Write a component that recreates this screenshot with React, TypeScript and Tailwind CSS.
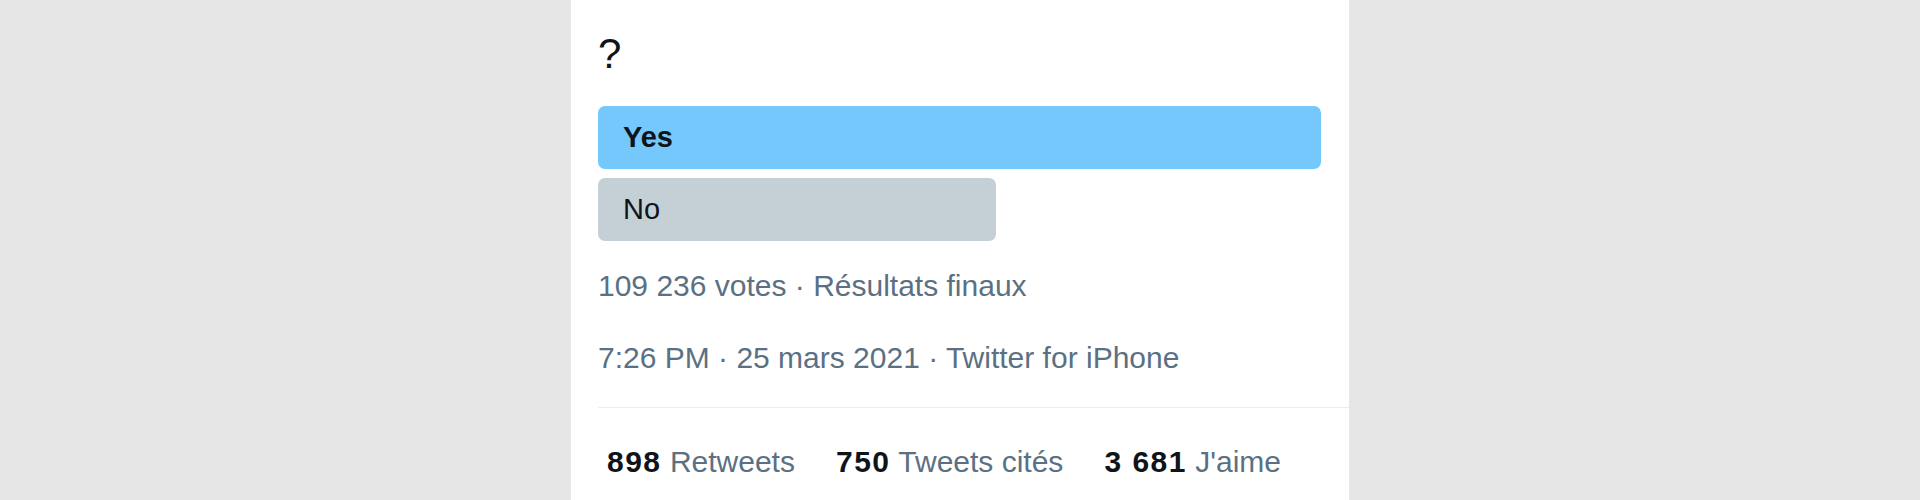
import React from "react";

export default function App() {
  return (
    <div
      className="w-full h-[500px] bg-[#e6e6e6] flex justify-center overflow-hidden"
      style={{ fontFamily: '"Liberation Sans", Arial, sans-serif' }}
    >
      <div className="w-[778px] h-full bg-white flex flex-col pl-[27px]">
        <div className="pt-[25px] pr-[28px] text-[42px] leading-[58px] text-[#0f1419]">?</div>
        <div className="mt-[23px] pr-[28px] flex flex-col gap-[9px]">
          <div className="h-[63px] w-full rounded-[7px] bg-[#74c8fc] flex items-center pl-[25px] text-[29px] font-bold text-[#0f1419]">
            Yes
          </div>
          <div className="h-[63px] w-[398px] rounded-[7px] bg-[#c4cfd6] flex items-center pl-[25px] text-[29px] text-[#0f1419]">
            No
          </div>
        </div>
        <div className="mt-[26px] text-[30px] leading-[38px] text-[#5b7083]">
          109 236 votes · Résultats finaux
        </div>
        <div className="mt-[34px] text-[30px] leading-[38px] text-[#5b7083]">
          7:26 PM · 25 mars 2021 · Twitter for iPhone
        </div>
        <div className="mt-[30px] h-px bg-[#ebeef0]" />
        <div className="mt-[35px] pl-[9px] flex gap-[41px] text-[30px] leading-[38px] text-[#5b7083]">
          <span>
            <span className="font-bold tracking-[1.5px] text-[#0f1419]">898</span> Retweets
          </span>
          <span>
            <span className="font-bold tracking-[1.5px] text-[#0f1419]">750</span> Tweets cités
          </span>
          <span>
            <span className="font-bold tracking-[1.5px] text-[#0f1419]">3 681</span> J'aime
          </span>
        </div>
      </div>
    </div>
  );
}
